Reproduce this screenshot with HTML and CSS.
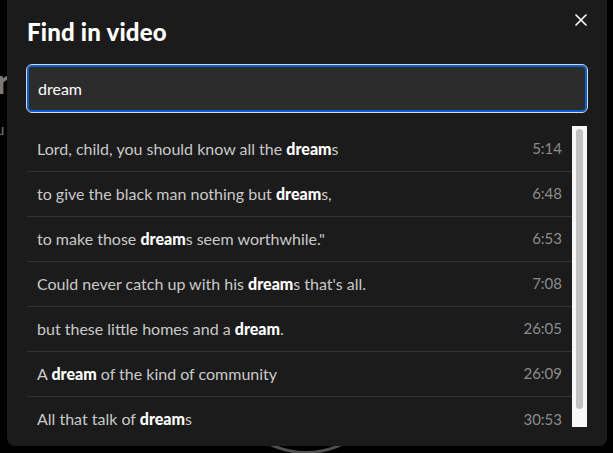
FILE: index.html
```html
<!DOCTYPE html>
<html>
<head>
<meta charset="utf-8">
<link rel="stylesheet" href="styles.css">
</head>
<body>
<div class="page">
  <div class="bg-title">r</div>
  <div class="bg-sub">u</div>
  <div class="bg-ring"></div>
</div>
<div class="modal">
  <div class="modal-head">
    <h1 class="modal-title">Find in video</h1>
    <button class="close" aria-label="Close">
      <svg width="12" height="12" viewBox="0 0 12 12"><path d="M1 1L11 11M11 1L1 11" stroke="#fff" stroke-width="1.6" stroke-linecap="round"/></svg>
    </button>
  </div>
  <div class="search"><input class="search-input" type="text" value="dream"></div>
  <div class="results">
    <ul class="list">
      <li class="row"><span class="line">Lord, child, you should know all the <b>dream</b>s</span><span class="time">5:14</span></li>
      <li class="row"><span class="line">to give the black man nothing but <b>dream</b>s,</span><span class="time">6:48</span></li>
      <li class="row"><span class="line">to make those <b>dream</b>s seem worthwhile."</span><span class="time">6:53</span></li>
      <li class="row"><span class="line">Could never catch up with his <b>dream</b>s that's all.</span><span class="time">7:08</span></li>
      <li class="row"><span class="line">but these little homes and a <b>dream</b>.</span><span class="time">26:05</span></li>
      <li class="row"><span class="line">A <b>dream</b> of the kind of community</span><span class="time">26:09</span></li>
      <li class="row"><span class="line">All that talk of <b>dream</b>s</span><span class="time">30:53</span></li>
    </ul>
    <div class="scrollbar"><div class="thumb"></div></div>
  </div>
</div>
</body>
</html>
```
FILE: styles.css
```css
html, body {
  margin: 0;
  padding: 0;
}
body {
  width: 613px;
  height: 453px;
  overflow: hidden;
  background: #000;
  font-family: "Lato", "Open Sans", sans-serif;
  position: relative;
}
.page {
  position: absolute;
  inset: 0;
}
.bg-title {
  position: absolute;
  left: -3px;
  top: 60px;
  font-size: 34px;
  font-weight: 700;
  color: #7a7a7a;
}
.bg-sub {
  position: absolute;
  left: -4px;
  top: 120px;
  font-size: 15px;
  color: #777;
}
.bg-ring {
  position: absolute;
  left: 221px;
  top: 284px;
  width: 170px;
  height: 170px;
  border-radius: 50%;
  border: 3px solid #505050;
  box-sizing: border-box;
}
.modal {
  position: absolute;
  left: 7px;
  top: -12px;
  width: 600px;
  height: 458px;
  background: #1b1b1b;
  border-radius: 8px;
  box-sizing: border-box;
  padding: 12px 20px 0 20px;
  display: flex;
  flex-direction: column;
}
.modal-head {
  display: flex;
  justify-content: space-between;
  align-items: flex-start;
  height: 65px;
}
.modal-title {
  margin: 17px 0 0 0;
  font-size: 24px;
  font-weight: 900;
  color: #fff;
  letter-spacing: 0.2px;
}
.close {
  margin: 14px 0 0 0;
  padding: 0;
  border: 0;
  background: none;
  width: 12px;
  height: 12px;
  display: flex;
}
.search {
  height: 47px;
}
.search-input {
  width: 100%;
  height: 47px;
  box-sizing: border-box;
  background: #2c2c2c;
  border: 2px solid #0a5fd6;
  outline: 1px solid #d8d8d8;
  outline-offset: 0;
  border-radius: 5px;
  padding: 0 9px;
  font-family: "Lato", "Open Sans", sans-serif;
  font-size: 16px;
  color: #fff;
  margin: 0;
}
.results {
  margin-top: 14px;
  display: flex;
  height: 301px;
}
.list {
  list-style: none;
  margin: 0;
  padding: 1px 0 0 0;
  flex: 1;
  overflow: hidden;
}
.row {
  height: 45px;
  box-sizing: border-box;
  border-bottom: 1px solid #333;
  display: flex;
  align-items: center;
  justify-content: space-between;
  padding: 0 10px 2px 10px;
  font-size: 16px;
  color: #c9c9c9;
}
.row:last-child {
  border-bottom: 0;
}
.line b {
  color: #fff;
  font-weight: 900;
}
.time {
  color: #8c8c8c;
  font-size: 15px;
}
.scrollbar {
  width: 15px;
  background: #f7f7f7;
  box-sizing: border-box;
  padding: 3px 4px 18px 4px;
}
.thumb {
  height: 100%;
  background: #c1c1c1;
  border-radius: 4px;
}
```
